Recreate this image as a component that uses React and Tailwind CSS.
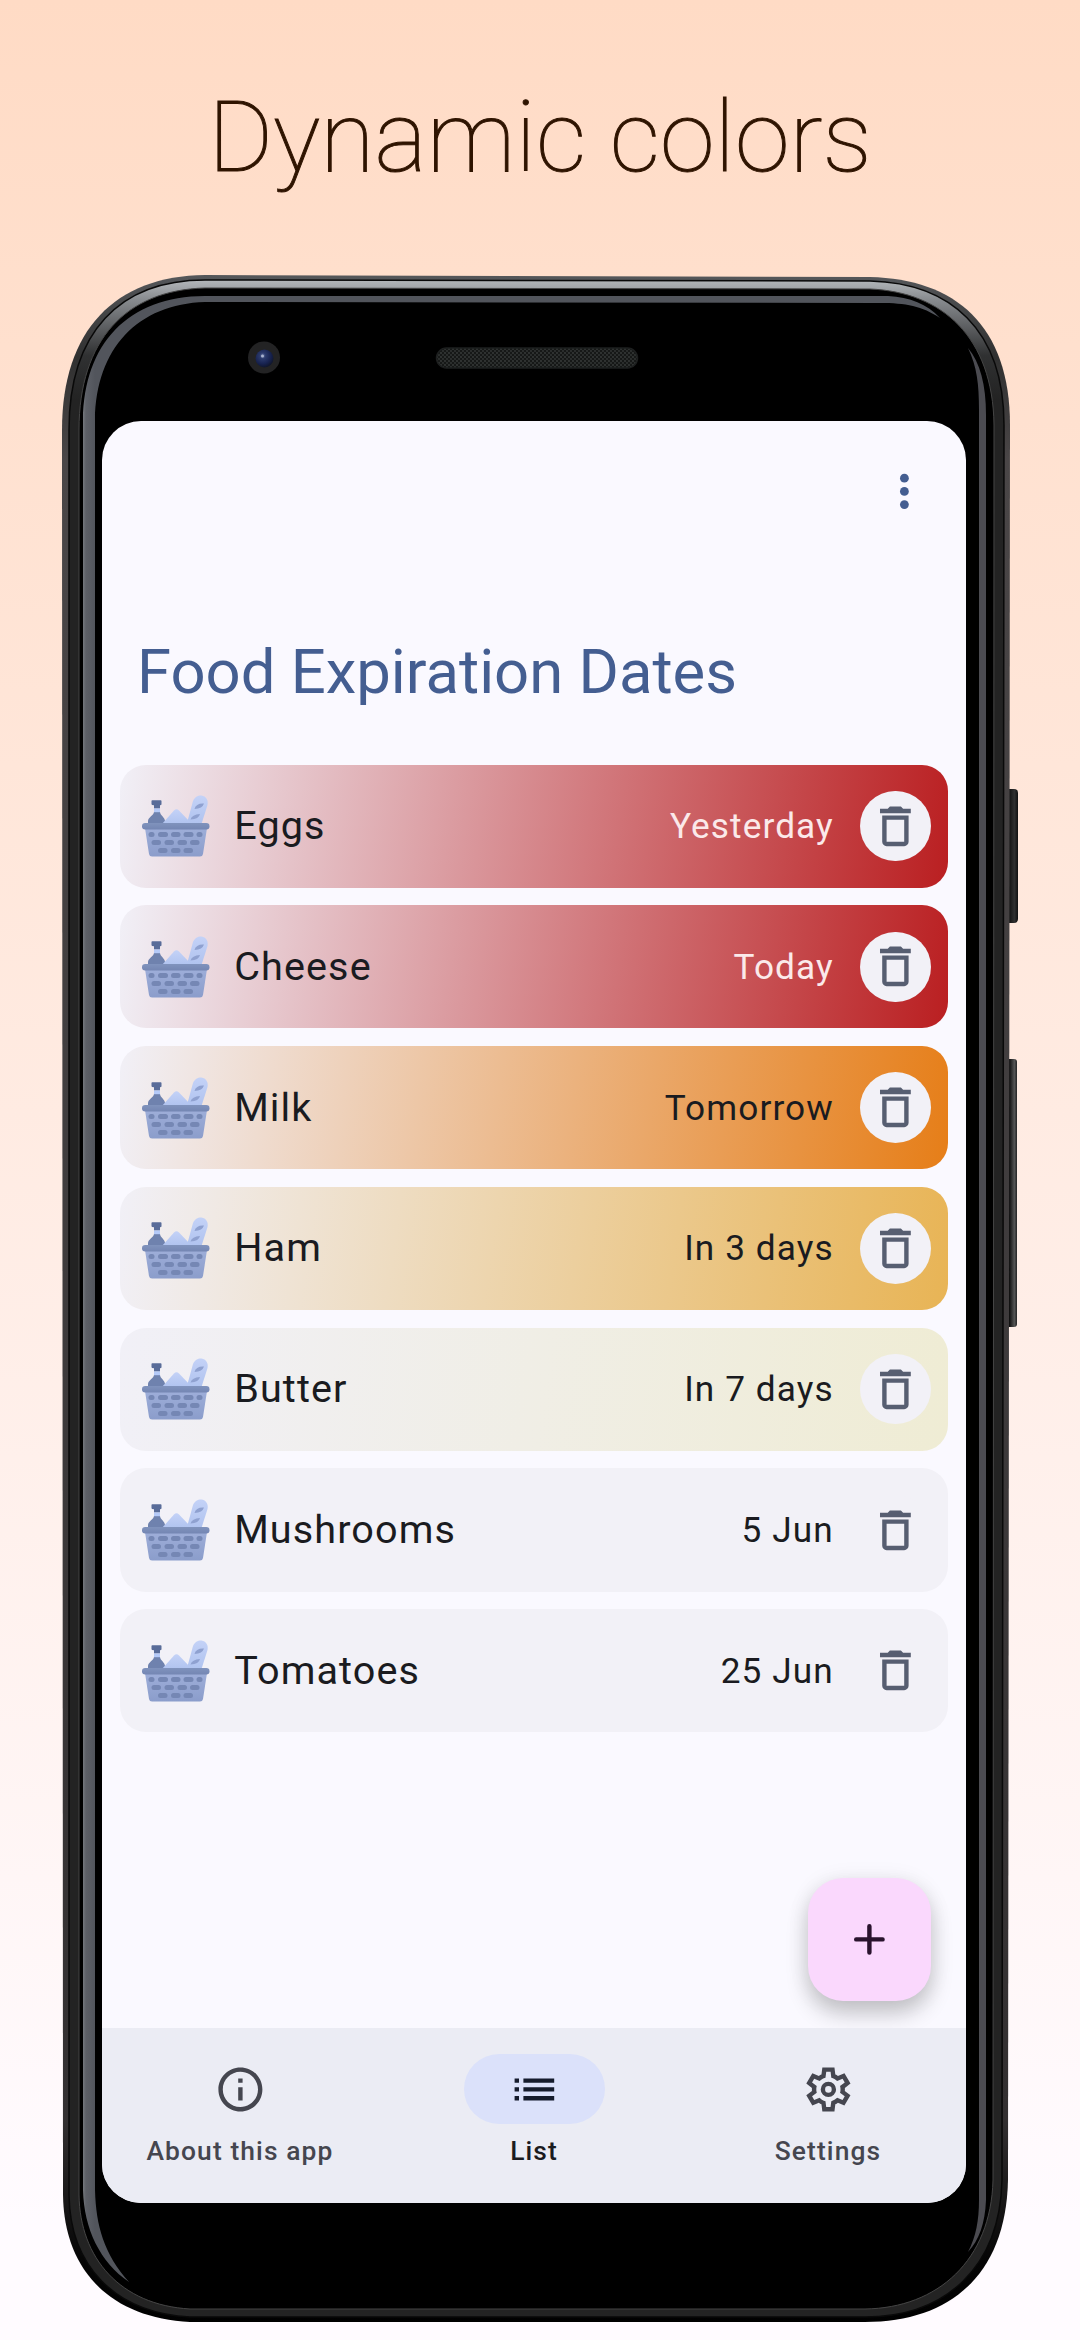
const trash = "M6 19c0 1.100.9 2 2 2h8c1.100 0 2-.9 2-2V7H6v12zM8 9h8v10H8V9zm7.500-5l-1-1h-5l-1 1H5v2h14V4h-3.500z";

const items = [
  { name: "Eggs", due: "Yesterday", fill: "bg-[linear-gradient(98deg,#f1f0f7_0%,#ba1f21_100%)]", text: "text-[#fbe9ea]" },
  { name: "Cheese", due: "Today", fill: "bg-[linear-gradient(98deg,#f1f0f7_0%,#ba1f21_100%)]", text: "text-[#fbe9ea]" },
  { name: "Milk", due: "Tomorrow", fill: "bg-[linear-gradient(98deg,#f1f0f7_0%,#e67e18_100%)]", text: "text-[#1a1b20]" },
  { name: "Ham", due: "In 3 days", fill: "bg-[linear-gradient(98deg,#f1f0f7_0%,#e8b455_100%)]", text: "text-[#1a1b20]" },
  { name: "Butter", due: "In 7 days", fill: "bg-[linear-gradient(98deg,#f1f0f7_0%,#efecd4_100%)]", text: "text-[#1a1b20]" },
  { name: "Mushrooms", due: "5 Jun", fill: "bg-[#f2f1f7]", text: "text-[#1a1b20]" },
  { name: "Tomatoes", due: "25 Jun", fill: "bg-[#f2f1f7]", text: "text-[#1a1b20]" },
];

function Basket() {
  const holes = [
    [6.5, 39.500, 6], [16, 39.500, 10], [29, 39.500, 9.500], [41.500, 39.500, 10], [54.500, 39.500, 6],
    [9.500, 47.500, 9.500], [22.500, 47.500, 9.500], [35.500, 47.500, 9.500], [48, 47.500, 9.500],
    [16, 55.500, 9.500], [29, 55.500, 9.500], [41.500, 55.500, 9.500],
  ];
  return (
    <svg width="68" height="62" viewBox="0 0 68 62" className="block shrink-0">
      <defs>
        <linearGradient id="bread" x1="0" y1="0" x2="0" y2="1"><stop stopColor="#c4d2f7" /><stop offset="1" stopColor="#b0c3ef" /></linearGradient>
        <linearGradient id="body" x1="0" y1="0" x2="0" y2="1"><stop stopColor="#9eaed9" /><stop offset="1" stopColor="#8b9dcb" /></linearGradient>
        <linearGradient id="rim" x1="0" y1="0" x2="0" y2="1"><stop stopColor="#8093bd" /><stop offset="1" stopColor="#7486b3" /></linearGradient>
      </defs>
      <path d="M45 28 L51 6 C53 1.500 56 .3 59.500 .5 C64 1.200 66.500 5 65.500 10 L59.500 29 Z" fill="url(#bread)" />
      <path d="M52.500 14 Q54 8 62 8.500 Q60.500 13.500 52.500 14ZM48.500 24.500 Q50 19.500 58 19 Q57 24 48.500 24.500Z" fill="#8fa1d0" />
      <path d="M6 29v-3c0-3.500 6-6 6-9h6c0 3 5 5.500 5 9v3z" fill="#6f82ae" />
      <path d="M20 29 L32 15.500 Q34.500 13.200 37 15.500 L50 29Z" fill="url(#bread)" />
      <path d="M9.500 6q0-.8.800-.8h8.400q.8 0 .8.800v3.200q0 .8-1.500 1v3.300h-6v-3.300q-2.500-.2-2.500-1z" fill="#596c99" />
      <path d="M12 13.500h6v3.700h-6z" fill="#b5caf8" />
      <path d="M3 33h62l-4 26q-.5 2.500-3 2.500H10q-2.500 0-3-2.500z" fill="url(#body)" />
      <rect x="0" y="28" width="67.500" height="6.500" rx="3.200" fill="url(#rim)" />
      {holes.map(([x, y, w]) => <rect key={`${x}-${y}`} x={x} y={y - 2.500} width={w} height="5" rx="2.500" fill="#7587b4" />)}
    </svg>
  );
}

function PhoneBody() {
  return (
    <svg width="1080" height="2340" viewBox="0 0 1080 2340" className="absolute inset-0">
      <defs>
        <linearGradient id="edge" x1="0" y1="275" x2="0" y2="2323" gradientUnits="userSpaceOnUse">
          <stop stopColor="#55575a" /><stop offset=".04" stopColor="#303030" /><stop offset=".09" stopColor="#4a4647" /><stop offset=".9" stopColor="#333031" /><stop offset=".97" stopColor="#050505" /><stop offset="1" stopColor="#000" />
        </linearGradient>
        <linearGradient id="shine" x1="0" y1="279" x2="0" y2="480" gradientUnits="userSpaceOnUse">
          <stop stopColor="#b5b9bc" /><stop offset=".1" stopColor="#898c90" /><stop offset=".38" stopColor="#303132" /><stop offset=".6" stopColor="#232323" /><stop offset="1" stopColor="#232323" />
        </linearGradient>
        <linearGradient id="rimL" x1="82" x2="95" y1="0" y2="0" gradientUnits="userSpaceOnUse">
          <stop stopColor="#7c8085" /><stop offset=".3" stopColor="#5d6067" /><stop offset="1" stopColor="#52555c" />
        </linearGradient>
        <linearGradient id="btn" x1="1009" x2="1018" y1="0" y2="0" gradientUnits="userSpaceOnUse">
          <stop stopColor="#121212" /><stop offset=".6" stopColor="#303030" /><stop offset="1" stopColor="#111" />
        </linearGradient>
        <linearGradient id="btnLong" x1="1009" x2="1018" y1="0" y2="0" gradientUnits="userSpaceOnUse">
          <stop stopColor="#0a0a0a" /><stop offset=".6" stopColor="#555" /><stop offset="1" stopColor="#111" />
        </linearGradient>
        <radialGradient id="lens" cx=".4" cy=".35" r=".65"><stop stopColor="#6b79a6" /><stop offset=".25" stopColor="#2b3a6c" /><stop offset=".7" stopColor="#17224f" /><stop offset="1" stopColor="#11172c" /></radialGradient>
        <pattern id="mesh" width="4" height="4" patternUnits="userSpaceOnUse"><rect width="4" height="4" fill="#161817" /><circle cx="1" cy="1" r=".9" fill="#3a3d3c" /><circle cx="3" cy="3" r=".9" fill="#343736" /></pattern>
      </defs>
      <rect x="1003" y="789" width="15" height="134" rx="4" fill="url(#btn)" />
      <rect x="1003" y="1059" width="14" height="268" rx="3" fill="url(#btnLong)" />
      <path d="M205 275 L870 277 C955 279 1010 325 1010 425 L1008 2180 C1006 2275 950 2322 865 2322 L190 2322 C110 2318 64 2270 63 2195 L62 430 C62 330 115 276 205 275Z" fill="url(#edge)" />
      <path d="M205 280 L870 281 C950 283 1004 329 1004 425 L1002 2180 C1000 2268 945 2317 865 2317 L190 2317 C114 2313 70 2265 69 2195 L69 430 C69 332 120 280 205 280Z" fill="url(#shine)" stroke="#090909" strokeWidth="1.500" />
      <path d="M205 288 L870 289 C942 292 993 337 994 425 L993 2180 C991 2260 938 2308 865 2309 L190 2309 C120 2305 80 2258 79 2195 L79 430 C79 340 126 290 205 288Z" fill="#000" stroke="#454545" strokeWidth="1" />
      <path d="M888 296 C910 297 927 304 940 318 C922 306 906 303 880 303 L205 302 C138 304 96 348 95 420 L95 2190 C96 2226 104 2254 129 2282 C100 2262 84 2229 83 2190 L83 420 C84 344 128 296 205 296Z" fill="url(#rimL)" />
      <path d="M968 348 C980 362 986 385 986 415 L986 2200 C985 2224 979 2240 968 2252 C976 2237 979 2220 979 2200 L979 410 C979 384 977 367 968 348Z" fill="#4b4b51" />
      <circle cx="264" cy="357.500" r="16" fill="#232324" />
      <circle cx="264.500" cy="358.500" r="9" fill="url(#lens)" />
      <circle cx="262.500" cy="356" r="1.500" fill="#a9b3cf" />
      <rect x="436.500" y="348" width="201" height="20" rx="10" fill="url(#mesh)" stroke="#1d1f1f" strokeWidth="1.500" />
    </svg>
  );
}

function NavItem({ label, active, children }) {
  return (
    <div className={`flex w-[276px] flex-col items-center ${active ? "text-[#151b2c]" : "text-[#45464f]"}`}>
      <div className={`flex h-[70.500px] w-[141px] items-center justify-center rounded-full ${active ? "bg-[#dbe1fa]" : ""}`}>
        <svg width="52.800" height="52.800" viewBox="0 0 24 24" fill="currentColor">{children}</svg>
      </div>
      <span className={`mt-[10px] text-[26.400px] leading-[35.200px] font-medium tracking-[1.100px] ${active ? "text-[#1a1b20]" : ""}`}>{label}</span>
    </div>
  );
}

export default function App() {
  return (
    <div className="relative h-[2340px] w-[1080px] overflow-hidden bg-[linear-gradient(180deg,#ffdbc5_0%,#fffbff_95%)] font-['Roboto',sans-serif]">
      <PhoneBody />
      <div className="relative flex flex-col">
        <h1 className="flex h-[421px] w-full items-start justify-center pt-[79px] text-[99px] leading-[116px] font-thin text-[#2f1400] [-webkit-text-stroke:1px_#2f1400]">Dynamic colors</h1>
        <main className="relative ml-[102px] flex h-[1782px] w-[864px] flex-col overflow-hidden rounded-[39px] bg-[#faf9ff]">
          <div className="flex h-[141px] shrink-0 items-center justify-end pr-[35px]">
            <svg width="52.800" height="52.800" viewBox="0 0 24 24" fill="#445e91"><circle cx="12" cy="6" r="2" /><circle cx="12" cy="12" r="2" /><circle cx="12" cy="18" r="2" /></svg>
          </div>
          <h2 className="mt-[71px] ml-[35px] h-[131.500px] shrink-0 text-[61.600px] leading-[79px] text-[#445e91]">Food Expiration Dates</h2>
          <ul className="flex flex-col gap-[17.600px] pr-[17.600px] pl-[17.600px]">
            {items.map((it) => (
              <li key={it.name} className={`flex h-[123.200px] items-center rounded-[26px] pr-[17.600px] pl-[22px] ${it.fill}`}>
                <Basket />
                <span className="ml-[24.600px] grow text-[39.600px] leading-[52px] tracking-[1.100px] text-[#1a1b20]">{it.name}</span>
                <span className={`mr-[26.500px] text-[35.200px] leading-[52px] tracking-[1.100px] ${it.text}`}>{it.due}</span>
                <span className="flex size-[70.500px] items-center justify-center rounded-full bg-[#f2f1f7]">
                  <svg width="52.800" height="52.800" viewBox="0 0 24 24" fill="#575e71"><path d={trash} /></svg>
                </span>
              </li>
            ))}
          </ul>
          <button className="absolute right-[35px] bottom-[202px] flex size-[123.200px] items-center justify-center rounded-[35px] bg-[#fad8fd] shadow-[0_13px_22px_rgba(0,0,0,0.2),0_2px_22px_rgba(0,0,0,0.08)]">
            <svg width="52.800" height="52.800" viewBox="0 0 24 24" stroke="#29132d" strokeWidth="2" strokeLinecap="round"><path d="M12 6v12M6 12h12" /></svg>
          </button>
          <nav className="relative mt-auto flex h-[175.500px] shrink-0 justify-between bg-[#ebecf4] pt-[26.400px]">
            <NavItem label="About this app"><path d="M11 7h2v2h-2zm0 4h2v6h-2zm1-9C6.480 2 2 6.480 2 12s4.480 10 10 10 10-4.480 10-10S17.520 2 12 2zm0 18c-4.410 0-8-3.590-8-8s3.590-8 8-8 8 3.590 8 8-3.590 8-8 8z" /></NavItem>
            <NavItem label="List" active><path d="M3 13h2v-2H3v2zm0 4h2v-2H3v2zm0-8h2V7H3v2zm4 4h14v-2H7v2zm0 4h14v-2H7v2zM7 7v2h14V7H7z" /></NavItem>
            <NavItem label="Settings"><path d="m9.250 22-.4-3.200q-.325-.125-.612-.3t-.563-.375L4.700 19.375l-2.750-4.750 2.575-1.950Q4.500 12.500 4.500 12.337v-.675q0-.162.025-.337L1.950 9.375l2.750-4.750 2.975 1.250q.275-.2.575-.375t.6-.3l.4-3.200h5.500l.4 3.200q.325.125.613.3t.562.375l2.975-1.250 2.750 4.750-2.575 1.950q.025.175.025.337v.675q0 .163-.05.338l2.575 1.950-2.750 4.750-2.950-1.250q-.275.2-.575.375t-.6.3l-.4 3.200zm1.750-2h1.975l.35-2.650q.775-.2 1.438-.588t1.212-.937l2.475 1.025.975-1.700-2.150-1.625q.125-.35.175-.737T17.500 12t-.05-.787-.175-.738l2.150-1.625-.975-1.700-2.475 1.050q-.55-.575-1.212-.963t-1.438-.587L13 4h-1.975l-.35 2.650q-.775.2-1.437.588t-1.213.937L5.550 7.150l-.975 1.700 2.150 1.600q-.125.375-.175.750t-.05.800q0 .4.050.775t.175.750l-2.150 1.625.975 1.700 2.475-1.050q.55.575 1.213.963t1.437.587zM12 8.500a3.500 3.500 0 1 0 0 7 3.500 3.500 0 0 0 0-7zm0 2a1.500 1.500 0 1 1 0 3 1.500 1.500 0 0 1 0-3z" fillRule="evenodd" /></NavItem>
          </nav>
        </main>
      </div>
    </div>
  );
}
